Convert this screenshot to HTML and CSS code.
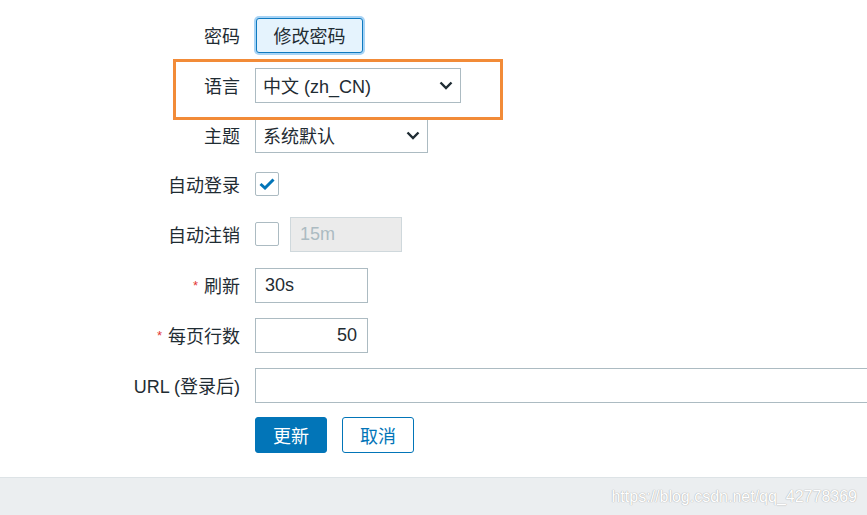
FILE: index.html
```html
<!DOCTYPE html>
<html lang="zh-CN">
<head>
<meta charset="utf-8">
<title>用户设置</title>
<link rel="stylesheet" href="styles.css">
</head>
<body>
<div class="page">
  <form class="form">
    <div class="row">
      <label class="label">密码</label>
      <div class="ctrl"><button type="button" class="btn-alt">修改密码</button></div>
    </div>
    <div class="row">
      <label class="label">语言</label>
      <div class="ctrl">
        <div class="select select-lang"><span>中文 (zh_CN)</span>
          <svg class="chev" width="14" height="9" viewBox="0 0 14 9"><path d="M1.5 1.5 L7 7 L12.5 1.5" fill="none" stroke="#1f2c33" stroke-width="2.4"/></svg>
        </div>
      </div>
    </div>
    <div class="row">
      <label class="label">主题</label>
      <div class="ctrl">
        <div class="select select-theme"><span>系统默认</span>
          <svg class="chev" width="14" height="9" viewBox="0 0 14 9"><path d="M1.5 1.5 L7 7 L12.5 1.5" fill="none" stroke="#1f2c33" stroke-width="2.4"/></svg>
        </div>
      </div>
    </div>
    <div class="row row-check">
      <label class="label">自动登录</label>
      <div class="ctrl">
        <span class="checkbox">
          <svg width="16" height="12" viewBox="0 0 16 12"><path d="M1.5 6 L6 10 L14.5 1.5" fill="none" stroke="#0275b8" stroke-width="3"/></svg>
        </span>
      </div>
    </div>
    <div class="row row-check">
      <label class="label">自动注销</label>
      <div class="ctrl">
        <span class="checkbox"></span>
        <div class="input input-disabled">15m</div>
      </div>
    </div>
    <div class="row">
      <label class="label"><span class="req">*</span>刷新</label>
      <div class="ctrl"><div class="input input-small">30s</div></div>
    </div>
    <div class="row">
      <label class="label"><span class="req">*</span>每页行数</label>
      <div class="ctrl"><div class="input input-small input-right">50</div></div>
    </div>
    <div class="row">
      <label class="label">URL (登录后)</label>
      <div class="ctrl"><div class="input input-url"></div></div>
    </div>
    <div class="row">
      <span class="label"></span>
      <div class="ctrl buttons">
        <button type="button" class="btn-primary">更新</button>
        <button type="button" class="btn-secondary">取消</button>
      </div>
    </div>
  </form>
  <div class="footer"><span class="watermark">https://blog.csdn.net/qq_42778369</span></div>
  <div class="highlight"></div>
</div>
</body>
</html>
```

FILE: styles.css
```css
html, body {
  margin: 0;
  padding: 0;
  overflow: hidden;
  background: #ffffff;
}
body {
  font-family: "Liberation Sans", "Noto Sans CJK SC", sans-serif;
  font-size: 18px;
  color: #1f2c33;
}
.page {
  position: relative;
  width: 867px;
  height: 515px;
  display: flex;
  flex-direction: column;
}
.form {
  padding-top: 10px;
  flex: 1;
}
.row {
  height: 50px;
  display: flex;
  align-items: center;
  gap: 15px;
}
.row-check {
  margin-top: -1px;
  margin-bottom: 1px;
}
.label {
  width: 240px;
  text-align: right;
  white-space: nowrap;
}
.req {
  color: #e33734;
  font-size: 13px;
  vertical-align: 3px;
  margin-right: 6px;
}
.ctrl {
  display: flex;
  align-items: center;
  flex: 1;
  min-width: 0;
}
.btn-alt {
  font: inherit;
  color: #1f2c33;
  width: 107px;
  height: 35px;
  margin-left: 1px;
  background: #e5f3fd;
  border: 1px solid #0f7ac0;
  border-radius: 3px;
  box-shadow: 0 0 0 2px #a7d3f5;
  padding: 0;
}
.select {
  box-sizing: border-box;
  height: 35px;
  border: 1px solid #acbbc2;
  display: flex;
  align-items: center;
  justify-content: space-between;
  padding: 0 7px 0 7px;
  background: #fff;
}
.select-lang { width: 206px; }
.select-theme { width: 173px; }
.chev { display: block; }
.checkbox {
  box-sizing: border-box;
  width: 24px;
  height: 24px;
  border: 1px solid #acbbc2;
  border-radius: 2px;
  display: flex;
  align-items: center;
  justify-content: center;
  background: #fff;
}
.input {
  box-sizing: border-box;
  height: 35px;
  border: 1px solid #acbbc2;
  display: flex;
  align-items: center;
  padding: 0 9px;
  background: #fff;
}
.input-disabled {
  width: 112px;
  margin-left: 11px;
  background: #ebebeb;
  border-color: #cfd8dc;
  color: #acbbc2;
}
.input-small { width: 113px; }
.input-right { justify-content: flex-end; padding-right: 10px; }
.input-url { width: 640px; flex-shrink: 0; }
.buttons { gap: 15px; }
.btn-primary, .btn-secondary {
  font: inherit;
  width: 72px;
  height: 36px;
  border-radius: 3px;
  padding: 0;
}
.btn-primary {
  background: #0275b8;
  border: 1px solid #0275b8;
  color: #fff;
}
.btn-secondary {
  background: #fff;
  border: 1px solid #0275b8;
  color: #0275b8;
}
.footer {
  height: 37px;
  background: #ebeef0;
  border-top: 1px solid #dde3e6;
  display: flex;
  align-items: center;
  justify-content: flex-end;
  padding-right: 10px;
}
.watermark {
  font-size: 16px;
  color: #ffffff;
  text-shadow: 0 0 1px #b0b0b0, 0 0 1px #b0b0b0;
}
.highlight {
  position: absolute;
  left: 173px;
  top: 59px;
  width: 324px;
  height: 55px;
  border: 3px solid #f28b38;
}
```
